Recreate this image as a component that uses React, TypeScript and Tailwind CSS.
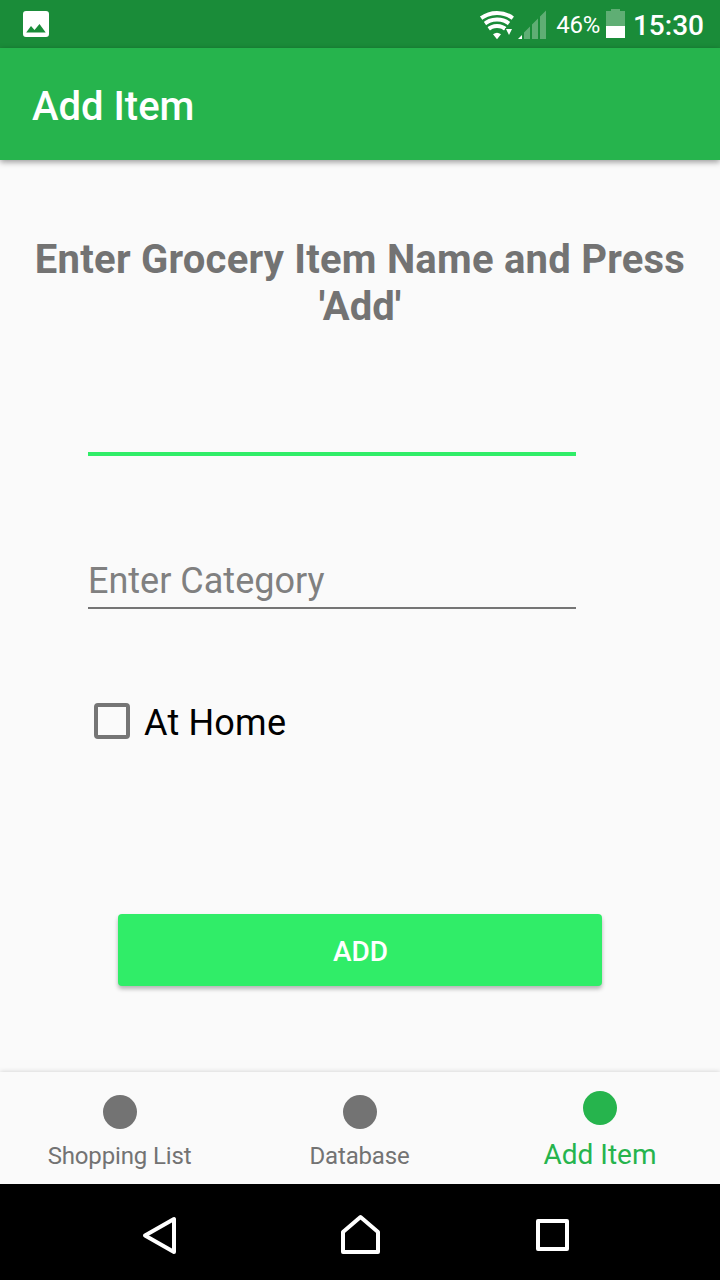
function StatusBar() {
  return (
    <div className="flex h-12 shrink-0 items-center bg-[#1a8c39] pl-[23px] pr-4 text-white">
      <svg width="26" height="26" viewBox="0 0 26 26">
        <path fill="#fff" fillRule="evenodd" d="M3 0h20a3 3 0 0 1 3 3v20a3 3 0 0 1-3 3H3a3 3 0 0 1-3-3V3a3 3 0 0 1 3-3zM3.200 21.500h19.500L16.500 13l-5 6-3.500-4z" />
      </svg>
      <svg className="ml-auto" width="67" height="48" viewBox="480 0 67 48">
        <defs>
          <clipPath id="fan">
            <path d="M497 40.500L479 15V8h36v7z" />
          </clipPath>
        </defs>
        <g clipPath="url(#fan)" fill="none" stroke="#fff" strokeWidth="4">
          <circle cx="497" cy="39.500" r="26.500" />
          <circle cx="497" cy="39.500" r="20" />
          <circle cx="497" cy="39.500" r="13.500" />
        </g>
        <path fill="#1a8c39" d="M505 28h8v8h-4.500z" />
        <path fill="#fff" d="M493 34.200q4-3 8 0l-4 5.100zM506 29h6l-3 6z" />
        <path fill="#fff" fillOpacity=".3" d="M524 32.500l6-6V39h-6zM532 24.500l6-6V39h-6zM540 16.500l6-6V39h-6z" />
        <path fill="#fff" d="M518 39l4-4v4z" />
      </svg>
      <span className="ml-[9px] pt-0.5 text-[24px] leading-[32px] tracking-[-0.3px]">46%</span>
      <svg className="ml-1.5" width="19" height="48" viewBox="0 0 19 48">
        <path fill="#fff" fillOpacity=".3" d="M5 9h9v2h5v15H0V11h5z" />
        <path fill="#fff" d="M0 26h19v12H0z" />
      </svg>
      <span className="ml-2 pt-[3px] text-[28px] font-medium leading-[32px]">15:30</span>
    </div>
  );
}

function Tab({ label, active = false }: { label: string; active?: boolean }) {
  return (
    <button
      className={
        active
          ? "flex w-60 flex-col items-center pt-[19px] text-[28px] leading-[32px] text-[#26b44d]"
          : "flex w-60 flex-col items-center pt-[23px] text-[24px] leading-[28px] tracking-[-0.15px] text-[#737373]"
      }
    >
      <span className="size-[34px] rounded-full bg-current" />
      <span className={active ? "mt-3.5" : "mt-[13px] pr-px"}>{label}</span>
    </button>
  );
}

export default function App() {
  return (
    <div className="flex h-[1280px] w-[720px] flex-col overflow-hidden bg-[#fafafa] font-['Roboto',sans-serif]">
      <StatusBar />
      <header className="z-10 flex h-28 shrink-0 items-center bg-[#26b44d] pl-8 pt-1.5 text-[40px] font-medium text-white shadow-[0_2px_6px_rgba(0,0,0,0.4)]">
        Add Item
      </header>
      <main className="flex h-[912px] shrink-0 flex-col">
        <h1 className="mt-[76px] text-center text-[40px] font-bold leading-[47px] text-[#737373]">
          <span className="tracking-[0.24px]">Enter Grocery Item Name and Press</span>
          <br />
          'Add'
        </h1>
        <div className="ml-[88px] mt-[82px] h-[44px] w-[488px] border-b-4 border-[#30ed68]" />
        <div className="ml-[88px] mt-[99px] h-[54px] w-[488px] border-b-2 border-[#757575] text-[36px] leading-[52px] text-[#808080]">
          Enter Category
        </div>
        <label className="ml-[94px] mt-[93px] flex h-[38px] items-center text-[36px] leading-[38px] text-black">
          <span className="size-9 rounded-[4px] border-4 border-[#757575]" />
          <span className="ml-3.5 pt-1 tracking-[0.2px]">At Home</span>
        </label>
        <button className="mx-auto mt-[174px] h-[72px] w-[484px] rounded-[4px] bg-[#30ed68] pl-px pt-[3px] text-[28px] font-medium text-white shadow-[0_3px_4px_rgba(0,0,0,0.28)]">
          ADD
        </button>
      </main>
      <nav className="flex h-28 shrink-0 bg-[#fafafa] shadow-[0_0_5px_rgba(0,0,0,0.18)]">
        <Tab label="Shopping List" />
        <Tab label="Database" />
        <Tab label="Add Item" active />
      </nav>
      <div className="z-10 flex h-24 shrink-0 items-center bg-black">
        <svg width="720" height="96" viewBox="0 1184 720 96" fill="none" stroke="#fff" strokeWidth="4" strokeLinejoin="round">
          <path d="M174 1219v33l-29-16.500z" />
          <path d="M343 1252v-20l17.500-15 17.500 15v20z" />
          <path d="M538 1221h29v28h-29z" />
        </svg>
      </div>
    </div>
  );
}
